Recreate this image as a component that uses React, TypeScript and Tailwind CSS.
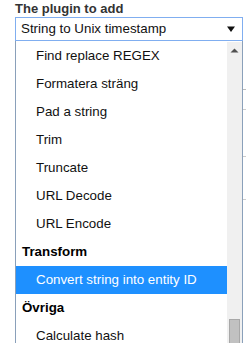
const ITEMS: { label: string; group?: boolean; selected?: boolean }[] = [
  { label: "Find replace REGEX" },
  { label: "Formatera sträng" },
  { label: "Pad a string" },
  { label: "Trim" },
  { label: "Truncate" },
  { label: "URL Decode" },
  { label: "URL Encode" },
  { label: "Transform", group: true },
  { label: "Convert string into entity ID", selected: true },
  { label: "Övriga", group: true },
  { label: "Calculate hash" },
];

function Row({ label, group, selected }: { label: string; group?: boolean; selected?: boolean }) {
  let cls = "h-[28px] shrink-0 leading-[28px] whitespace-nowrap text-[13.33px] ";
  if (group) cls += "pl-[6px] font-bold text-black";
  else if (selected) cls += "pl-[20px] bg-[#1e90ff] text-white";
  else cls += "pl-[20px] text-[#111]";
  return <div className={cls}>{label}</div>;
}

export default function App() {
  return (
    <div
      className="w-[246px] h-[343px] overflow-hidden bg-white flex"
      style={{ fontFamily: '"Liberation Sans", Arial, sans-serif' }}
    >
      <div className="w-[243px] shrink-0 flex flex-col">
        {/* Label */}
        <div className="h-[17px] leading-[17px] pl-[15px] text-[13px] font-bold text-[#333]">
          The plugin to add
        </div>

        {/* Select */}
        <div className="ml-[15px] h-[24px] border border-[#80aef0] flex items-center pl-[5px] pr-[6px] text-[13.33px] text-[#111]">
          <span className="flex-1">String to Unix timestamp</span>
          <svg width="8" height="6" viewBox="0 0 8 6" className="mr-[1px]">
            <path d="M0 0.5h8L4 6z" fill="#111" />
          </svg>
        </div>

        {/* Dropdown list */}
        <div className="ml-[15px] flex-1 min-h-0 flex border-l border-r border-[#8aa0ba] pt-[1px]">
          <div className="flex-1 flex flex-col overflow-hidden">
            {ITEMS.map((it) => (
              <Row key={it.label} {...it} />
            ))}
          </div>
          <div className="w-[15px] shrink-0 bg-[#f0f0f0] flex flex-col items-center">
            <svg width="9" height="5" viewBox="0 0 9 5" className="mt-[6px]">
              <path d="M0.5 4.5h8L4.5 0.5z" fill="#505050" />
            </svg>
            <div className="flex-1" />
            <div className="w-[11px] h-[25px] bg-[#c1c1c1] border border-[#a8a8a8] -mb-[1px]" />
          </div>
        </div>
      </div>

      {/* page content peeking out behind the dropdown */}
      <div className="flex-1 flex flex-col">
        <div className="h-[89px]" />
        <div className="h-[20px] border-t border-[#bbb]" />
        <div className="h-[47px] border-t border-[#ccc]" />
        <div className="h-[43px] border-t border-[#ccc]" />
        <div className="h-[24px] border-t border-[#ccc]" />
      </div>
    </div>
  );
}
